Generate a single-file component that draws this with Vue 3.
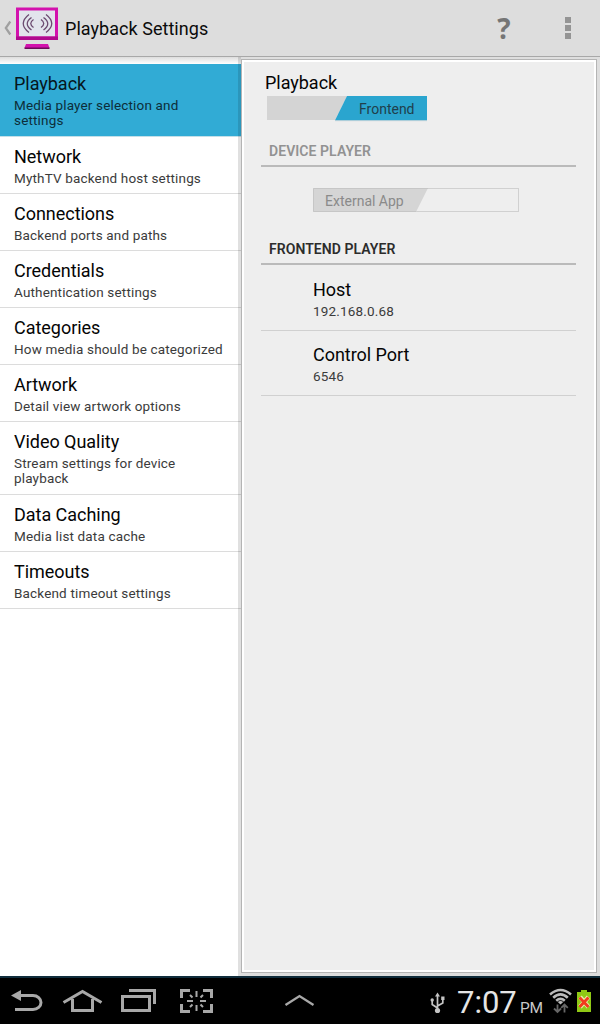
<script setup>
const items = [
  { title: 'Playback', lines: ['Media player selection and', 'settings'], selected: true },
  { title: 'Network', lines: ['MythTV backend host settings'] },
  { title: 'Connections', lines: ['Backend ports and paths'] },
  { title: 'Credentials', lines: ['Authentication settings'] },
  { title: 'Categories', lines: ['How media should be categorized'] },
  { title: 'Artwork', lines: ['Detail view artwork options'] },
  { title: 'Video Quality', lines: ['Stream settings for device', 'playback'] },
  { title: 'Data Caching', lines: ['Media list data cache'] },
  { title: 'Timeouts', lines: ['Backend timeout settings'] },
]
const prefs = [
  { title: 'Host', value: '192.168.0.68' },
  { title: 'Control Port', value: '6546' },
]
</script>

<template>
  <div class="screen">
    <header class="bar">
      <svg class="logo" width="62" height="56" viewBox="0 0 62 56">
        <path d="M10.3 21.5 L5.8 28 L10.3 34.5" fill="none" stroke="#a0a0a0" stroke-width="2.2" />
        <rect x="17.5" y="9" width="39" height="29" fill="#e2e4ec" stroke="#d312ad" stroke-width="3" />
        <path d="M16 36.5h42v3.5h-42z" fill="#b00a8e" />
        <path d="M26 44h22l1.5 4h-25z" fill="#d312ad" />
        <path d="M24.5 47.500h25v1.500h-25z" fill="#6d0a5a" />
        <g fill="none" stroke="#6b4a70" stroke-width="1.3">
          <path d="M29 14.500Q17.500 23.500 29 32.500" />
          <path d="M31.500 17.500Q23 23.500 31.500 30" />
          <path d="M33.500 19.500Q28 23.500 33.500 27.500" />
          <path d="M46 14.500Q57.500 23.500 46 32.500" />
          <path d="M43.500 17.500Q52 23.500 43.500 30" />
          <path d="M41 19.500Q46.500 23.500 41 27.500" />
        </g>
      </svg>
      <h1>Playback Settings</h1>
      <span class="help">?</span>
      <span class="more"><i /><i /><i /></span>
    </header>

    <main class="body">
      <nav class="list">
        <div v-for="i in items" :key="i.title" class="item" :class="{ selected: i.selected }">
          <div class="title">{{ i.title }}</div>
          <div v-for="l in i.lines" :key="l" class="sub">{{ l }}</div>
        </div>
      </nav>
      <section class="pane">
        <div class="panel">
          <div class="title heading">Playback</div>
          <div class="switch">
            <svg width="160" height="26" viewBox="0 0 160 26">
              <path d="M0 0H80L68 24H0z" fill="#d4d4d4" />
              <path d="M68 24H160V25.300H68z" fill="#d8dcde" />
              <path d="M80 0H160V24.300H68z" fill="#2aa5cf" />
            </svg>
            <span>Frontend</span>
          </div>
          <div class="category off">DEVICE PLAYER</div>
          <div class="switch disabled">
            <svg width="206" height="24" viewBox="0 0 206 24">
              <rect x=".5" y=".5" width="205" height="23" fill="#eee" stroke="#d0d0d0" />
              <path d="M0 0H115L103 24H0z" fill="#d5d5d5" />
              <path d="M115 .5H.5V23.500H103" fill="none" stroke="#c6c6c6" />
            </svg>
            <span>External App</span>
          </div>
          <div class="category">FRONTEND PLAYER</div>
          <div v-for="p in prefs" :key="p.title" class="pref">
            <div class="title">{{ p.title }}</div>
            <div class="sub">{{ p.value }}</div>
          </div>
        </div>
      </section>
    </main>

    <footer class="system">
      <svg width="320" height="46" viewBox="0 0 320 46">
        <g fill="none" stroke="#a8a8a8" stroke-width="3">
          <path d="M19 17.500H33a8 7 0 0 1 0 14H15" />
          <path d="M11 17.500L21 12V23z" fill="#a8a8a8" stroke="none" />
          <path d="M63.500 24.500L82.500 13.500L101.500 24.500" />
          <path d="M72.500 21V32.500H92.500V21" />
          <rect x="122.500" y="18.500" width="27" height="14" />
          <path d="M129 12.500H154.500V26" />
          <path d="M181.500 20V12.500H190M203 12.500H211.500V20M211.500 26V33.500H203M190 33.500H181.500V26" />
          <path d="M196.500 13V19M196.500 27V33M187 23H193M200 23H206" stroke-width="2" />
          <path d="M190 17L192.500 19.500M203 17L200.500 19.500M190 29L192.500 26.500M203 29L200.500 26.500" stroke-width="2" />
          <path d="M285.500 27L299.500 18L313.500 27" stroke-width="2.300" />
        </g>
      </svg>
      <svg class="usb" width="16" height="24" viewBox="0 0 16 24">
        <g fill="none" stroke="#c4c4c4" stroke-width="1.700">
          <path d="M7.500 3V19M7.500 16L2.200 12.500V8M7.500 14L12.800 11V7" />
        </g>
        <path d="M7.500 .5L10 4.500H5zM11.200 4.500h3.300v3.500h-3.300z" fill="#c4c4c4" />
        <circle cx="2.200" cy="8" r="1.700" fill="#c4c4c4" />
        <circle cx="7.500" cy="18.500" r="2.600" fill="#c4c4c4" />
      </svg>
      <span class="time">7:07</span>
      <span class="pm">PM</span>
      <svg class="status" width="46" height="30" viewBox="0 0 46 30">
        <g fill="none" stroke="#bbb" stroke-width="2.600">
          <path d="M1 6.500Q11.500 -2.500 22 6.500" />
          <path d="M4.200 9.700Q11.500 3 18.800 9.700" />
          <path d="M7.200 12.700Q11.500 9 15.800 12.700" />
        </g>
        <path d="M8.800 14Q11.500 11.900 14.200 14L11.500 16.500z" fill="#bbb" />
        <g fill="none" stroke="#666" stroke-width="1.800">
          <path d="M8.500 16.500V24M5 20.500L8.500 24L12 20.500M15.500 24.500V17M12.200 19.800L15.500 16.500L18.800 19.800" />
        </g>
        <path d="M32 2h6v2h4v20h-14V4h4z" fill="#8fc815" />
        <path d="M31 9L39.500 19M39.500 9L31 19" stroke="#e9efb0" stroke-width="4.500" />
        <path d="M30.500 9.500L39.500 19M39.500 9.500L30.500 19" stroke="#f03c1c" stroke-width="3" />
      </svg>
    </footer>
  </div>
</template>

<style>
body { margin: 0; }
</style>

<style scoped>
.screen {
  width: 600px;
  height: 1024px;
  display: flex;
  flex-direction: column;
  overflow: hidden;
  background: #fff;
  color: #0b0b0b;
  font-family: Roboto, "Liberation Sans", sans-serif;
  white-space: nowrap;
}
.bar {
  height: 57px;
  box-sizing: border-box;
  display: flex;
  align-items: center;
  background: #ddd;
  border-bottom: 1px solid #a8a8a8;
}
.logo { display: block; margin-right: 3px; }
h1 { margin: 2px 0 0; font-size: 18px; font-weight: 400; line-height: 24px; letter-spacing: .04px; width: 432px; }
.help {
  width: 14px;
  text-align: center;
  margin-top: -1px;
  font: 700 28px/34px "Open Sans", sans-serif;
  color: #757575;
}
.more { display: flex; flex-direction: column; gap: 2px; margin-left: 54px; }
.more i { width: 6px; height: 6px; background: #949494; }
.body { height: 919px; display: grid; grid-template-columns: 241px 359px; }
.list { position: relative; padding-top: 7px; background: linear-gradient(#ddd, #fff 7px); }
.list::after {
  content: "";
  position: absolute;
  inset: 0 0 0 auto;
  width: 3px;
  background: rgba(0, 0, 0, .12);
}
.item {
  height: 57px;
  box-sizing: border-box;
  padding: 8px 0 0 14px;
  border-bottom: 1px solid #dcdcdc;
}
.item:has(.sub + .sub) { height: 73px; }
.item.selected { background: #31abd5; border-bottom-color: #c4dfe8; }
.title { font-size: 18px; line-height: 24px; letter-spacing: -.03px; color: #050505; }
.sub { font-size: 13.5px; line-height: 15px; letter-spacing: .16px; color: #3b3b3b; }
.title + .sub { margin-top: 2px; }
.item.selected .sub { color: #0d2e3a; }
.item.selected .title { color: #06161c; }
.pane {
  display: flex;
  padding: 2px 3px 3px 0;
  background: #dedede;
}
.panel {
  flex: 1;
  border: 1px solid #b4b4b4;
  box-shadow: inset 0 0 0 2px #fff;
  background: #eee;
  padding: 9px 20px 0 19px;
}
.heading { margin-left: 4px; height: 27px; line-height: 27px; }
.switch { position: relative; margin-left: 6px; height: 26px; font-size: 14px; }
.switch svg { display: block; }
.switch span { position: absolute; left: 92px; top: 4px; line-height: 18px; color: #20404c; }
.category {
  height: 45px;
  box-sizing: border-box;
  padding: 20px 0 0 8px;
  border-bottom: 2px solid #bababa;
  font-size: 14px;
  font-weight: 600;
  line-height: 18px;
  letter-spacing: .06px;
  color: #2c2c2c;
}
.category.off { color: #929292; }
.disabled { height: 24px; margin: 21px 0 8px 52px; }
.disabled span { left: 12px; color: #8a8a8a; }
.pref {
  height: 65px;
  box-sizing: border-box;
  padding: 12px 0 0 52px;
  border-bottom: 1px solid #d0d0d0;
}
.category + .pref { height: 66px; padding-top: 13px; }
.system {
  height: 48px;
  box-sizing: border-box;
  border-top: 2px solid #102d3c;
  background: #000;
  display: flex;
}
.usb { margin: 14px 0 0 110px; }
.time { margin: 6px 0 0 11px; width: 63px; font-size: 31px; line-height: 38px; color: #e5e5e5; }
.pm { margin-top: 20px; width: 29px; font-size: 15.5px; letter-spacing: -.3px; line-height: 20px; color: #c8c8c8; }
.status { margin-top: 10px; }
</style>
